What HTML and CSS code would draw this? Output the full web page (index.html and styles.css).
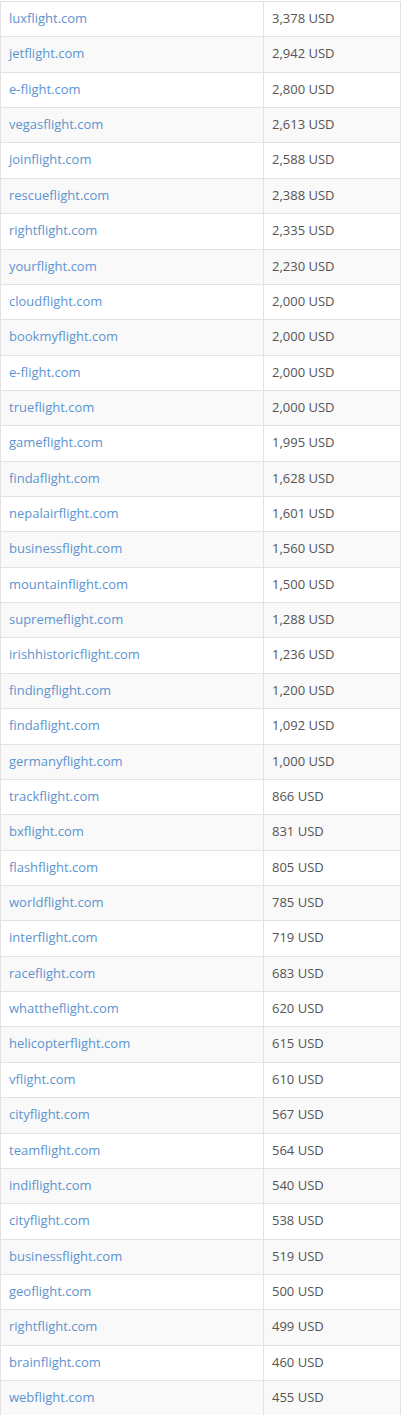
FILE: index.html
```html
<!DOCTYPE html>
<html>
<head>
<meta charset="utf-8">
<link rel="stylesheet" href="styles.css">
</head>
<body>
<table class="sales">
<colgroup><col class="c-domain"><col class="c-price"></colgroup>
<tbody>
<tr><td><a href="#">luxflight.com</a></td><td>3,378 USD</td></tr>
<tr><td><a href="#">jetflight.com</a></td><td>2,942 USD</td></tr>
<tr><td><a href="#">e-flight.com</a></td><td>2,800 USD</td></tr>
<tr><td><a href="#">vegasflight.com</a></td><td>2,613 USD</td></tr>
<tr><td><a href="#">joinflight.com</a></td><td>2,588 USD</td></tr>
<tr><td><a href="#">rescueflight.com</a></td><td>2,388 USD</td></tr>
<tr><td><a href="#">rightflight.com</a></td><td>2,335 USD</td></tr>
<tr><td><a href="#">yourflight.com</a></td><td>2,230 USD</td></tr>
<tr><td><a href="#">cloudflight.com</a></td><td>2,000 USD</td></tr>
<tr><td><a href="#">bookmyflight.com</a></td><td>2,000 USD</td></tr>
<tr><td><a href="#">e-flight.com</a></td><td>2,000 USD</td></tr>
<tr><td><a href="#">trueflight.com</a></td><td>2,000 USD</td></tr>
<tr><td><a href="#">gameflight.com</a></td><td>1,995 USD</td></tr>
<tr><td><a href="#">findaflight.com</a></td><td>1,628 USD</td></tr>
<tr><td><a href="#">nepalairflight.com</a></td><td>1,601 USD</td></tr>
<tr><td><a href="#">businessflight.com</a></td><td>1,560 USD</td></tr>
<tr><td><a href="#">mountainflight.com</a></td><td>1,500 USD</td></tr>
<tr><td><a href="#">supremeflight.com</a></td><td>1,288 USD</td></tr>
<tr><td><a href="#">irishhistoricflight.com</a></td><td>1,236 USD</td></tr>
<tr><td><a href="#">findingflight.com</a></td><td>1,200 USD</td></tr>
<tr><td><a href="#">findaflight.com</a></td><td>1,092 USD</td></tr>
<tr><td><a href="#">germanyflight.com</a></td><td>1,000 USD</td></tr>
<tr><td><a href="#">trackflight.com</a></td><td>866 USD</td></tr>
<tr><td><a href="#">bxflight.com</a></td><td>831 USD</td></tr>
<tr><td><a href="#">flashflight.com</a></td><td>805 USD</td></tr>
<tr><td><a href="#">worldflight.com</a></td><td>785 USD</td></tr>
<tr><td><a href="#">interflight.com</a></td><td>719 USD</td></tr>
<tr><td><a href="#">raceflight.com</a></td><td>683 USD</td></tr>
<tr><td><a href="#">whattheflight.com</a></td><td>620 USD</td></tr>
<tr><td><a href="#">helicopterflight.com</a></td><td>615 USD</td></tr>
<tr><td><a href="#">vflight.com</a></td><td>610 USD</td></tr>
<tr><td><a href="#">cityflight.com</a></td><td>567 USD</td></tr>
<tr><td><a href="#">teamflight.com</a></td><td>564 USD</td></tr>
<tr><td><a href="#">indiflight.com</a></td><td>540 USD</td></tr>
<tr><td><a href="#">cityflight.com</a></td><td>538 USD</td></tr>
<tr><td><a href="#">businessflight.com</a></td><td>519 USD</td></tr>
<tr><td><a href="#">geoflight.com</a></td><td>500 USD</td></tr>
<tr><td><a href="#">rightflight.com</a></td><td>499 USD</td></tr>
<tr><td><a href="#">brainflight.com</a></td><td>460 USD</td></tr>
<tr><td><a href="#">webflight.com</a></td><td>455 USD</td></tr>
</tbody>
</table>
</body>
</html>
```
FILE: styles.css
```css
html, body {
  margin: 0;
  padding: 0;
  background: #fff;
}
body {
  padding-top: 1px;
  font-family: "Open Sans", "Liberation Sans", sans-serif;
  font-size: 13px;
  color: #555;
}
.sales {
  width: 401px;
  border-collapse: collapse;
  table-layout: fixed;
  border: 1px solid #e2e2e2;
}
.c-domain { width: 263px; }
.sales td {
  border: 1px solid #e2e2e2;
  padding: 7px 8px 0 8px;
  height: 27.36px;
  box-sizing: content-box;
  line-height: 18px;
  vertical-align: top;
  white-space: nowrap;
}
.sales tr:nth-child(even) td {
  background: #f9f9f9;
}
.sales a {
  color: #5d94cf;
  text-decoration: none;
}
```
